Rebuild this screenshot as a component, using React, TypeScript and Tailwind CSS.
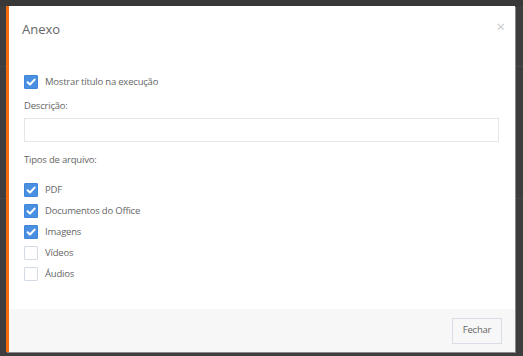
import React from "react";

function Check({ checked }: { checked: boolean }) {
  return checked ? (
    <span className="flex h-[14px] w-[14px] items-center justify-center rounded-[1px] bg-[#4a90e2] border border-[#3f86d8]">
      <svg width="10" height="10" viewBox="0 0 10 10">
        <path d="M1.6 5.2 L4 7.5 L8.6 2.6" fill="none" stroke="white" strokeWidth="2" strokeLinecap="round" strokeLinejoin="round" />
      </svg>
    </span>
  ) : (
    <span className="block h-[14px] w-[14px] rounded-[1px] border border-[#d5dbe3] bg-white" />
  );
}

function Row({ checked, label }: { checked: boolean; label: string }) {
  return (
    <div className="flex h-[21px] items-center gap-[7px]">
      <Check checked={checked} />
      <span className="text-[9.5px] leading-[14px] tracking-[-0.2px] text-[#666]">{label}</span>
    </div>
  );
}

export default function App() {
  return (
    <div
      className="relative h-[356px] w-[523px] overflow-hidden bg-[#3d3d3d]"
      style={{ fontFamily: '"Open Sans", "Noto Sans", sans-serif' }}
    >
      <div className="absolute left-0 top-[66px] h-px w-full bg-[#474747]" />
      <div className="absolute left-0 top-[198px] h-px w-full bg-[#474747]" />
      <div className="absolute left-0 top-0 h-[6px] w-full bg-[#383838]" />
      <div className="absolute left-[6px] top-[6px] flex h-[346px] w-[509px] flex-col border-l-[3px] border-[#f26b0f] bg-white shadow-[1px_1px_0_#8a8a8a]">
        <div className="flex h-[48px] items-start justify-between pl-[13px] pr-[10px] pt-[14px]">
          <span className="text-[13px] leading-[18px] text-[#666]">Anexo</span>
          <span className="mt-[-1px] text-[15px] leading-none text-[#c8c8c8]">×</span>
        </div>
        <div className="flex flex-1 flex-col px-[15px] pt-[17px]">
          <Row checked label="Mostrar título na execução" />
          <div className="mt-[7px] text-[9.5px] leading-[14px] tracking-[-0.2px] text-[#666]">Descrição:</div>
          <div className="mt-[5px] h-[24px] w-[475px] border border-[#e6e6e6] bg-white" />
          <div className="mt-[11px] text-[9.5px] leading-[14px] tracking-[-0.2px] text-[#666]">Tipos de arquivo:</div>
          <div className="mt-[12px] flex flex-col">
            <Row checked label="PDF" />
            <Row checked label="Documentos do Office" />
            <Row checked label="Imagens" />
            <Row checked={false} label="Vídeos" />
            <Row checked={false} label="Áudios" />
          </div>
        </div>
        <div className="flex h-[43px] items-center justify-end bg-[#f7f7f7] pr-[13px]">
          <button className="h-[26px] w-[50px] border border-[#d9dee6] bg-[#f7f7f7] text-[9.5px] tracking-[-0.2px] text-[#666]">
            Fechar
          </button>
        </div>
      </div>
    </div>
  );
}
